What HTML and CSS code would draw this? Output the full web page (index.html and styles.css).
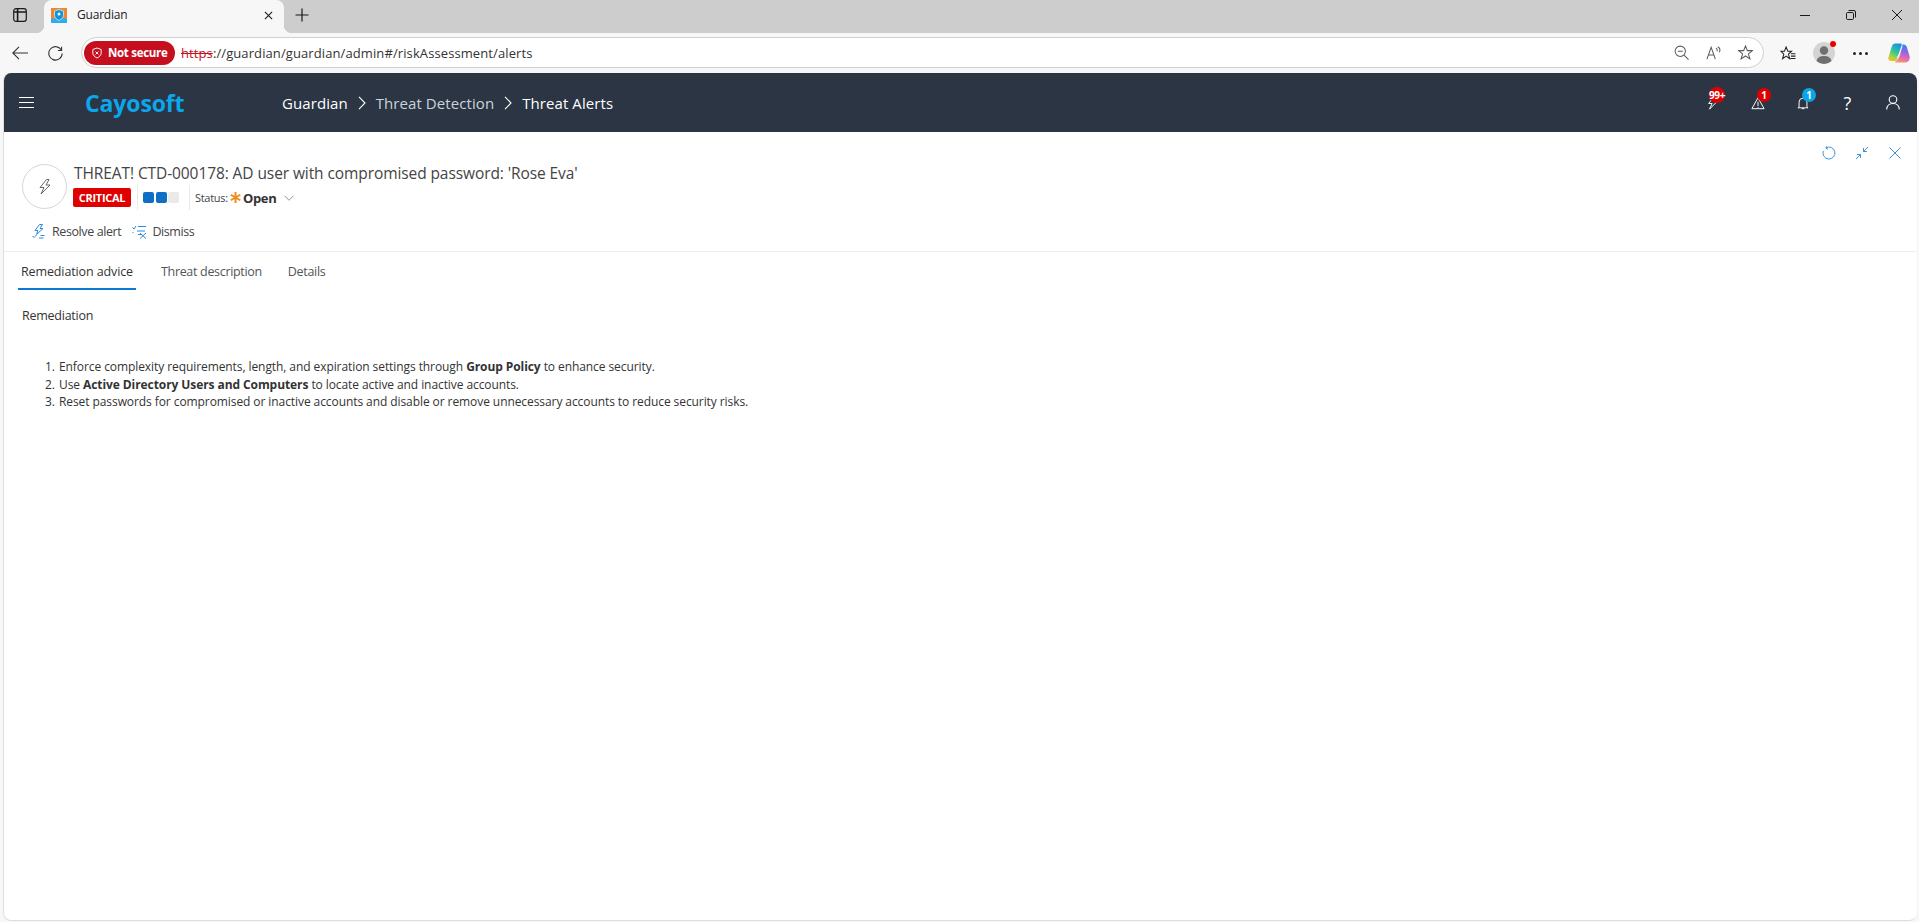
FILE: index.html
```html
<!DOCTYPE html>
<html lang="en">
<head>
<meta charset="utf-8">
<title>Guardian</title>
<link rel="stylesheet" href="styles.css">
</head>
<body>
<div class="browser">
  <div class="tabstrip">
    <svg class="ic sidebar-ic" viewBox="0 0 14 14" fill="none" stroke="#1a1a1a" stroke-width="1.2"><rect x=".7" y=".7" width="12.600" height="12.600" rx="2.400"/><path d="M1 4H13M4.600 1V13" stroke-width="1.600"/></svg>
    <div class="tab">
      <svg class="favicon" viewBox="0 0 16 15"><rect width="16" height="15" fill="#f0862e"/><rect y="10.500" width="16" height="4.500" fill="#29aef0"/><path d="M3 15c.5-3 2.500-4 5-4s4.500 1 5 4Z" fill="#29aef0"/><path d="M8 1.500 12.500 3v4.200c0 2.500-2 4.200-4.500 5.300-2.500-1.100-4.500-2.800-4.500-5.300V3Z" fill="#1592d8" stroke="#cfeefc" stroke-width=".8"/><circle cx="8" cy="6" r="1.500" fill="#e9f8ff"/></svg>
      <span class="tab-title">Guardian</span>
      <svg class="ic tab-x" viewBox="0 0 10 10" stroke="#1a1a1a" stroke-width="1.200"><path d="M1 1 9 9M9 1 1 9"/></svg>
    </div>
    <svg class="ic new-tab" viewBox="0 0 14 14" stroke="#1a1a1a" stroke-width="1.200"><path d="M7 .5V13.500M.5 7H13.500"/></svg>
    <div class="win-controls">
      <svg class="ic win-ic" viewBox="0 0 10 10" stroke="#1a1a1a" stroke-width="1"><path d="M0 5.500H10"/></svg>
      <svg class="ic win-ic" viewBox="0 0 10 10" fill="none" stroke="#1a1a1a" stroke-width="1"><rect x=".5" y="2.500" width="7" height="7" rx="1.200"/><path d="M2.500 .5H8a1.500 1.500 0 0 1 1.500 1.500V7.500"/></svg>
      <svg class="ic win-ic" viewBox="0 0 10 10" stroke="#1a1a1a" stroke-width="1"><path d="M0 0 10 10M10 0 0 10"/></svg>
    </div>
  </div>

  <div class="toolbar">
    <svg class="ic back-ic" viewBox="0 0 16 14" fill="none" stroke="#333" stroke-width="1.100"><path d="M16 7H.8M7 .8.800 7 7 13.200"/></svg>
    <svg class="ic reload-ic" viewBox="0 0 15 15" fill="none" stroke="#333" stroke-width="1.100"><path d="M13.300 4A6.700 6.700 0 1 0 14.200 7.500M13.600 .8v3.700H9.900"/></svg>
    <div class="address">
      <div class="not-secure">
        <svg class="shield" viewBox="0 0 12 14" fill="none" stroke="#fff" stroke-width="1.100"><path d="M6 1 11 2.800V7c0 2.800-2.200 4.700-5 6C3.200 11.700 1 9.800 1 7V2.800Z"/><path d="M4.300 5.300 7.700 8.700M7.700 5.300 4.300 8.700"/></svg>
        <span>Not secure</span>
      </div>
      <div class="url"><s class="https">https</s><span>://guardian/guardian/admin#/riskAssessment/alerts</span></div>
      <div class="addr-icons">
        <svg class="ic addr-ic" viewBox="0 0 16 16" fill="none" stroke="#5c5c5c" stroke-width="1.100"><circle cx="6.700" cy="6.700" r="5.500"/><path d="M10.700 10.700 15.500 15.500M4 6.700H9.400"/></svg>
        <svg class="ic addr-ic" viewBox="0 0 16 16" fill="none" stroke="#5c5c5c" stroke-width="1.100"><path d="M1 15 5.500 2.500 10 15M2.600 10.600H8.400M10.500 3.500c1.300.6 1.700 1.900 1.200 3.200M12.500 1.800c2.200 1.200 2.800 3.800 1.700 6"/></svg>
        <svg class="ic addr-ic" viewBox="0 0 16 16" fill="none" stroke="#5c5c5c" stroke-width="1.100"><path d="M8 1 10 6h5.300l-4.200 3.400 1.600 5.400L8 11.700l-4.700 3.100 1.600-5.400L.7 6H6Z"/></svg>
      </div>
    </div>
    <svg class="ic fav-ic" viewBox="0 0 17 16" fill="none" stroke="#222" stroke-width="1.100"><path d="M6.500 1 8.300 5.500h4L9 8.600l1.300 5-3.800-2.800-3.800 2.800 1.300-5L.8 5.500h3.900Z"/><path d="M11.500 8.200H16.500M11.700 10.800H16.500M11 13.400H16.500"/></svg>
    <div class="avatar">
      <svg class="avatar-ic" viewBox="0 0 22 22"><circle cx="11" cy="11" r="11" fill="#d4d4d4"/><circle cx="11" cy="8.500" r="4.200" fill="#6f6f6f"/><path d="M3.500 19c1-4 4-5 7.500-5s6.500 1 7.500 5a11 11 0 0 1-15 0Z" fill="#6f6f6f"/></svg>
      <i class="avatar-dot"></i>
    </div>
    <div class="dots"><i></i><i></i><i></i></div>
    <svg class="copilot" viewBox="0 0 22 20"><defs><linearGradient id="cg1" x1="0.700" y1="0" x2="0.200" y2="1"><stop offset="0" stop-color="#1b8fe8"/><stop offset=".45" stop-color="#2ec79a"/><stop offset=".8" stop-color="#b8d238"/><stop offset="1" stop-color="#f4b92e"/></linearGradient><linearGradient id="cg2" x1="0.600" y1="0" x2="0.400" y2="1"><stop offset="0" stop-color="#2a86ee"/><stop offset=".4" stop-color="#9a62e4"/><stop offset=".8" stop-color="#ee6fa6"/><stop offset="1" stop-color="#f79a5c"/></linearGradient></defs><path d="M7 .5h5.500c1 0 1.500.8 1 2L9 16c-.6 1.600-1.500 2-3 2H3.500C1 18 -.3 16.500.5 14L4 3C4.500 1.500 5.500 .5 7 .5Z" fill="url(#cg1)"/><path d="M14 1.500h1.500c1.800 0 2.800 1 3.300 2.500L21.500 13c.8 3-.8 6.500-4 6.500H8c-1 0-1.200-.7-.5-1.300C9.500 17 10.500 15 11.500 12.500L14 5c.5-1.500.5-3.500 0-3.500Z" fill="url(#cg2)"/><path d="M13.500 9 10.500 16.500 8 14Z" fill="#fff" opacity=".35"/></svg>
  </div>

  <div class="app">
    <header class="app-header">
      <svg class="ic menu-ic" viewBox="0 0 15 11" stroke="#fff" stroke-width="1"><path d="M0 .5H15M0 5.500H15M0 10.500H15"/></svg>
      <div class="logo">Cayosoft</div>
      <nav class="crumbs">
        <span class="crumb">Guardian</span>
        <svg class="ic crumb-sep" viewBox="0 0 8 14" fill="none" stroke="#fff" stroke-width="1.100"><path d="M1 .8 7 7 1 13.200"/></svg>
        <span class="crumb crumb-dim">Threat Detection</span>
        <svg class="ic crumb-sep" viewBox="0 0 8 14" fill="none" stroke="#fff" stroke-width="1.100"><path d="M1 .8 7 7 1 13.200"/></svg>
        <span class="crumb">Threat Alerts</span>
      </nav>
      <div class="hdr-icons">
        <div class="hdr-item">
          <svg class="ic hdr-ic" viewBox="0 0 14 16" fill="none" stroke="#fff" stroke-width="1.100"><path d="M8.500 .5 2 8.500h4L3 15 12 6H8L11 .5Z"/></svg>
          <b class="badge badge-red badge-wide">99+</b>
        </div>
        <div class="hdr-item">
          <svg class="ic hdr-ic" viewBox="0 0 16 16" fill="none" stroke="#fff" stroke-width="1.100"><path d="M8 2 15 14.500H1ZM8 6.500V11.500M8 12.500V13.500"/></svg>
          <b class="badge badge-red">1</b>
        </div>
        <div class="hdr-item">
          <svg class="ic hdr-ic" viewBox="0 0 14 16" fill="none" stroke="#fff" stroke-width="1.100"><path d="M2.500 12.500V7a4.500 4.500 0 0 1 9 0v5.500l1.300 1H1.200ZM5.500 14.500h3"/></svg>
          <b class="badge badge-blue">1</b>
        </div>
        <div class="hdr-item"><span class="help">?</span></div>
        <div class="hdr-item">
          <svg class="ic user-ic" viewBox="0 0 14 15" fill="none" stroke="#fff" stroke-width="1.100"><circle cx="7" cy="4.500" r="3.800"/><path d="M.7 14.500c.2-3.700 2.600-6 6.300-6s6.100 2.300 6.300 6"/></svg>
        </div>
      </div>
    </header>

    <main class="content">
      <div class="panel-tools">
        <svg class="ic tool-ic" viewBox="0 0 14 14" fill="none" stroke="#3a94dc" stroke-width="1"><path d="M4 1.800A6 6 0 1 1 1.300 5M4.500 .3 4 2.300l2 .8"/></svg>
        <svg class="ic tool-ic" viewBox="0 0 14 14" fill="none" stroke="#3a94dc" stroke-width="1"><path d="M1 13 5.500 8.500M2 8.500h3.500V12M13 1 8.500 5.500M8.500 2v3.500H12"/></svg>
        <svg class="ic tool-ic" viewBox="0 0 14 14" fill="none" stroke="#3a94dc" stroke-width="1"><path d="M1.500 1.500 12.500 12.500M12.500 1.500 1.500 12.500"/></svg>
      </div>

      <div class="alert-head">
        <div class="alert-circle">
          <svg class="alert-bolt" viewBox="0 0 14 16" fill="none" stroke="#666" stroke-width="1"><path d="M8.500 .5 2 8.500h4L3 15 12 6H8L11 .5Z"/></svg>
        </div>
        <div class="alert-info">
          <div class="alert-title">THREAT! CTD-000178: AD user with compromised password: 'Rose Eva'</div>
          <div class="alert-meta">
            <span class="severity">CRITICAL</span>
            <span class="vsep"></span>
            <span class="blocks"><i class="on"></i><i class="on"></i><i></i></span>
            <span class="vsep vsep-2"></span>
            <span class="status-label">Status:</span>
            <svg class="star" viewBox="0 0 12 12" stroke="#f08c1e" stroke-width="2.200"><path d="M6 0V12M.8 3 11.200 9M11.200 3 .8 9"/></svg>
            <span class="status-val">Open</span>
            <svg class="ic status-chev" viewBox="0 0 11 6" fill="none" stroke="#888" stroke-width="1"><path d="M.5.5 5.500 5.500 10.500.5"/></svg>
          </div>
        </div>
      </div>

      <div class="actions">
        <svg class="ic act-ic" viewBox="0 0 13 15" fill="none" stroke="#2b8bd9" stroke-width="1"><path d="M7.500 .5 3 6.500h3L4.500 10.500 11 4.500H8L10.500 .5ZM.5 12l1.500 1.500L4.500 11M7 14h4.500M8.500 11.500h4"/></svg>
        <span class="act-label">Resolve alert</span>
        <svg class="ic act-ic-2" viewBox="0 0 15 15" fill="none" stroke="#2b8bd9" stroke-width="1"><path d="M.5 3.500 2 5 4 2M6 2.500H14M.5 8l1 1M5 7H13M6 10.500H10M8 9 14 14.500M14 9 8 14.500"/></svg>
        <span class="act-label act-label-2">Dismiss</span>
      </div>

      <div class="tabs">
        <div class="tab-link tab-active">Remediation advice</div>
        <div class="tab-link">Threat description</div>
        <div class="tab-link">Details</div>
      </div>

      <section class="remediation">
        <h2 class="rem-title">Remediation</h2>
        <ol class="rem-list">
          <li>Enforce complexity requirements, length, and expiration settings through <b>Group Policy</b> to enhance security.</li>
          <li>Use <b>Active Directory Users and Computers</b> to locate active and inactive accounts.</li>
          <li>Reset passwords for compromised or inactive accounts and disable or remove unnecessary accounts to reduce security risks.</li>
        </ol>
      </section>
    </main>
  </div>
</div>
</body>
</html>
```

FILE: styles.css
```css
* { box-sizing: border-box; }
html, body { margin: 0; height: 100%; overflow: hidden; }
body { font-family: "Open Sans", "Noto Sans", sans-serif; color: #333; background: #f7f7f7; }
.ic { display: block; flex: none; }
.browser { display: flex; flex-direction: column; height: 922px; width: 1919px; }

/* tab strip */
.tabstrip { height: 33px; background: #cdcdcd; display: flex; align-items: center; flex: none; }
.sidebar-ic { width: 14px; height: 14px; margin-left: 13px; margin-top: -3px; }
.tab { position: relative; width: 240px; height: 33px; margin-left: 17px; background: #f7f7f7; border-radius: 8px 8px 0 0; display: flex; align-items: center; flex: none; }
.tab::before, .tab::after { content: ""; position: absolute; bottom: 0; width: 8px; height: 8px; }
.tab::before { left: -8px; background: radial-gradient(circle at 0 0, transparent 8px, #f7f7f7 8.500px); }
.tab::after { right: -8px; background: radial-gradient(circle at 100% 0, transparent 8px, #f7f7f7 8.500px); }
.favicon { width: 16px; height: 15px; margin-left: 7px; margin-top: -3px; flex: none; }
.tab-title { font-size: 12px; margin-left: 10px; color: #222; flex: 1; line-height: 30px; height: 33px; letter-spacing: -.2px; }
.tab-x { width: 9px; height: 9px; margin-right: 11px; margin-top: -3px; }
.new-tab { width: 14px; height: 14px; margin-left: 11px; margin-top: -3px; }
.win-controls { margin-left: auto; display: flex; gap: 36px; margin-right: 17px; margin-top: -3px; }
.win-ic { width: 10px; height: 10px; }

/* toolbar */
.toolbar { height: 40px; display: flex; align-items: center; flex: none; background: #f7f7f7; }
.back-ic { width: 16px; height: 14px; margin-left: 12px; }
.reload-ic { width: 15px; height: 15px; margin-left: 20px; }
.address { width: 1683px; height: 31px; margin-left: 18px; margin-top: -1px; border: 1px solid #d0d0d0; border-radius: 16px; background: #fff; display: flex; align-items: center; padding-left: 2px; flex: none; }
.not-secure { width: 91px; height: 24px; background: #c50f1f; color: #fff; border-radius: 12px; display: flex; align-items: center; font-size: 11.500px; font-weight: 700; white-space: nowrap; letter-spacing: -.3px; flex: none; }
.shield { width: 10px; height: 12px; margin: 0 6px 0 8px; flex: none; }
.url { margin-left: 6px; font-size: 13px; color: #333; white-space: nowrap; letter-spacing: .1px; }
.https { color: #c50f1f; }
.addr-icons { margin-left: auto; display: flex; gap: 17px; margin-right: 10px; }
.addr-ic { width: 15px; height: 15px; }
.fav-ic { width: 16px; height: 15px; margin-left: 16px; }
.avatar { position: relative; width: 22px; height: 22px; margin-left: 17px; flex: none; }
.avatar-ic { display: block; width: 22px; height: 22px; }
.avatar-dot { position: absolute; right: -1px; top: -1px; width: 6px; height: 6px; border-radius: 50%; background: #e00; }
.dots { display: flex; gap: 3px; margin-left: 18px; }
.dots i { width: 3px; height: 3px; border-radius: 50%; background: #222; }
.copilot { width: 22px; height: 20px; margin-left: 20px; flex: none; }

/* app */
.app { flex: 1; margin: 0 2px 1px 3px; background: #fff; border-radius: 8px; border: 1px solid #dedede; border-top: 0; border-right: 0; display: flex; flex-direction: column; overflow: hidden; min-height: 0; }
.app-header { height: 59px; flex: none; background: #2b3544; color: #fff; display: flex; align-items: center; }
.menu-ic { width: 15px; height: 11px; margin-left: 15px; }
.logo { font-size: 23px; font-weight: 700; color: #0ca6ec; margin-left: 51px; width: 197px; letter-spacing: -.12px; }
.crumbs { display: flex; align-items: center; font-size: 15px; letter-spacing: .08px; }
.crumb { color: #fff; white-space: nowrap; }
.crumb-dim { color: #ccd3da; }
.crumb-sep { width: 8px; height: 14px; margin: 0 10px; }
.hdr-icons { margin-left: auto; margin-right: 2px; display: flex; align-items: center; }
.hdr-item { position: relative; width: 45px; height: 59px; display: flex; align-items: center; justify-content: center; }
.hdr-ic { width: 14px; height: 14px; }
.user-ic { width: 14px; height: 15px; }
.help { font-size: 18px; font-weight: 400; color: #fff; }
.badge { position: absolute; top: 15px; left: 22px; width: 14px; height: 14px; border-radius: 50%; font-size: 10px; line-height: 14px; text-align: center; color: #fff; font-weight: 700; font-style: normal; }
.badge-red { background: #de0000; }
.badge-blue { background: #0aa4e8; }
.badge-wide { width: 16px; height: 16px; line-height: 16px; left: 19px; top: 14px; font-size: 10px; letter-spacing: -.4px; white-space: nowrap; text-align: left; }

.content { flex: 1; position: relative; }
.panel-tools { position: absolute; right: 15px; top: 14px; display: flex; gap: 19px; align-items: center; }
.tool-ic { width: 14px; height: 14px; }
.alert-head { display: flex; padding: 32px 0 0 18px; }
.alert-circle { width: 45px; height: 45px; border: 1px solid #d6d6d6; border-radius: 50%; display: flex; align-items: center; justify-content: center; flex: none; }
.alert-bolt { width: 14px; height: 16px; }
.alert-info { margin-left: 6px; margin-top: -2px; }
.alert-title { font-size: 15.500px; line-height: 22px; color: #444; white-space: nowrap; letter-spacing: -.09px; padding-left: 1px; }
.alert-meta { display: flex; align-items: center; height: 25px; margin-top: 1px; }
.severity { width: 58px; height: 19px; background: #df0000; border-radius: 2px; color: #fff; font-size: 11px; font-weight: 700; line-height: 19px; text-align: center; letter-spacing: -.3px; margin-right: 6px; }
.vsep { width: 1px; height: 25px; background: #eaeaea; flex: none; }
.vsep-2 { margin-left: 10px; }
.blocks { display: flex; gap: 1.500px; margin-left: 5px; }
.blocks i { width: 11px; height: 11px; background: #eaeaea; border-radius: 2px; }
.blocks .on { background: #0f6fc4; }
.status-label { font-size: 11px; margin-left: 5px; color: #444; letter-spacing: -.3px; width: 31px; white-space: nowrap; }
.star { width: 11px; height: 11px; margin-left: 4px; flex: none; }
.status-val { font-size: 13px; font-weight: 700; margin-left: 2px; color: #333; letter-spacing: -.35px; }
.status-chev { width: 10px; height: 6px; margin-left: 8px; }

.actions { display: flex; align-items: center; height: 20px; margin-top: 11px; padding-left: 28px; }
.act-ic { width: 13px; height: 15px; }
.act-ic-2 { width: 15px; height: 15px; margin-left: 11px; display: block; flex: none; }
.act-label { font-size: 12.500px; color: #444; margin-left: 7px; letter-spacing: -.4px; white-space: nowrap; }
.act-label-2 { margin-left: 5px; }

.tabs { display: flex; margin-top: 10px; border-top: 1px solid #eee; height: 39px; padding-left: 14px; }
.tab-link { font-size: 12.500px; color: #555; padding: 5px 3px 0; line-height: 30px; height: 38px; margin-right: 20px; letter-spacing: -.32px; white-space: nowrap; }
.tab-active { border-bottom: 2px solid #0a78d4; color: #333; font-weight: 500; letter-spacing: -.12px; margin-right: 22px; }

.remediation { padding: 16px 0 0 18px; }
.rem-title { font-size: 12.500px; font-weight: 500; margin: 0; line-height: 20px; color: #333; letter-spacing: -.25px; }
.rem-list { margin: 32px 0 0; padding: 0 0 0 23px; list-style: none; counter-reset: step; font-size: 12px; line-height: 17.500px; color: #333; letter-spacing: -.08px; }
.rem-list li { counter-increment: step; }
.rem-list li::before { content: counter(step) "."; display: inline-block; width: 14px; }
.rem-list b { font-weight: 700; }
```
